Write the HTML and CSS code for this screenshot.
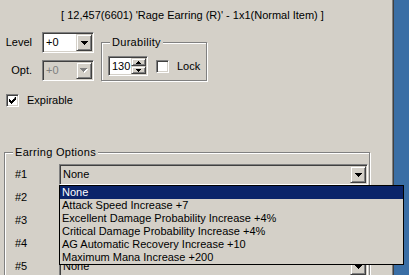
FILE: index.html
```html
<!DOCTYPE html>
<html>
<head>
<meta charset="utf-8">
<link rel="stylesheet" href="styles.css">
</head>
<body>
<div class="window">
  <div class="panel">
    <div class="title">[ 12,457(6601) 'Rage Earring (R)' - 1x1(Normal Item) ]</div>
    <div class="top">
      <div class="levels">
        <div class="row">
          <span class="lbl">Level</span>
          <div class="combo white"><span class="val">+0</span><span class="btn"><svg width="7" height="4" viewBox="0 0 7 4"><path d="M0 0h7v1h-1v1h-1v1h-1v1h-1v-1h-1v-1h-1v-1h-1z" fill="#000"/></svg></span></div>
        </div>
        <div class="row">
          <span class="lbl">Opt.</span>
          <div class="combo disabled"><span class="val">+0</span><span class="btn"><svg width="8" height="5" viewBox="0 0 8 5"><path d="M1 1h7v1h-1v1h-1v1h-1v1h-1v-1h-1v-1h-1v-1h-1z" fill="#fff"/><path d="M0 0h7v1h-1v1h-1v1h-1v1h-1v-1h-1v-1h-1v-1h-1z" fill="#808080"/></svg></span></div>
        </div>
      </div>
      <fieldset class="group dur">
        <legend>Durability</legend>
        <div class="durrow">
          <div class="spin">
            <span class="num">130</span>
            <span class="spinbtns">
              <span class="sbtn"><svg width="5" height="3" viewBox="0 0 5 3"><path d="M2 0h1v1h1v1h1v1h-5v-1h1v-1h1z" fill="#000"/></svg></span>
              <span class="sbtn"><svg width="5" height="3" viewBox="0 0 5 3"><path d="M0 0h5v1h-1v1h-1v1h-1v-1h-1v-1h-1z" fill="#000"/></svg></span>
            </span>
          </div>
          <span class="check"><span class="cbox"></span><span class="ctext">Lock</span></span>
        </div>
      </fieldset>
    </div>
    <div class="expirable check"><span class="cbox"><svg width="7" height="7" viewBox="0 0 7 7"><path d="M6 0h1v3h-1v1h-1v1h-1v1h-1v1h-1v-1h-1v-1h-1v-3h1v1h1v1h1v-1h1v-1h1z" fill="#000"/></svg></span><span class="ctext">Expirable</span></div>
    <fieldset class="group options">
      <legend>Earring Options</legend>
      <div class="optrows">
        <div class="orow"><span class="olbl">#1</span><div class="combo gray wide"><span class="val">None</span><span class="btn"><svg width="7" height="4" viewBox="0 0 7 4"><path d="M0 0h7v1h-1v1h-1v1h-1v1h-1v-1h-1v-1h-1v-1h-1z" fill="#000"/></svg></span></div></div>
        <div class="orow"><span class="olbl">#2</span><div class="combo gray wide"><span class="val"></span><span class="btn"><svg width="7" height="4" viewBox="0 0 7 4"><path d="M0 0h7v1h-1v1h-1v1h-1v1h-1v-1h-1v-1h-1v-1h-1z" fill="#000"/></svg></span></div></div>
        <div class="orow"><span class="olbl">#3</span><div class="combo gray wide"><span class="val"></span><span class="btn"><svg width="7" height="4" viewBox="0 0 7 4"><path d="M0 0h7v1h-1v1h-1v1h-1v1h-1v-1h-1v-1h-1v-1h-1z" fill="#000"/></svg></span></div></div>
        <div class="orow"><span class="olbl">#4</span><div class="combo gray wide"><span class="val"></span><span class="btn"><svg width="7" height="4" viewBox="0 0 7 4"><path d="M0 0h7v1h-1v1h-1v1h-1v1h-1v-1h-1v-1h-1v-1h-1z" fill="#000"/></svg></span></div></div>
        <div class="orow"><span class="olbl">#5</span><div class="combo gray wide"><span class="val">None</span><span class="btn"><svg width="7" height="4" viewBox="0 0 7 4"><path d="M0 0h7v1h-1v1h-1v1h-1v1h-1v-1h-1v-1h-1v-1h-1z" fill="#000"/></svg></span></div></div>
      </div>
    </fieldset>
  </div>
  <div class="edge"></div>
  <div class="desktop"></div>
  <ul class="list">
    <li class="sel">None</li>
    <li>Attack Speed Increase +7</li>
    <li>Excellent Damage Probability Increase +4%</li>
    <li>Critical Damage Probability Increase +4%</li>
    <li>AG Automatic Recovery Increase +10</li>
    <li>Maximum Mana Increase +200</li>
  </ul>
</div>
</body>
</html>
```

FILE: styles.css
```css
* { box-sizing: border-box; }
html, body { margin: 0; padding: 0; }
body {
  width: 409px;
  height: 275px;
  overflow: hidden;
  background: #3A6EA5;
  font-family: "Liberation Sans", Arial, sans-serif;
  font-size: 11px;
  line-height: 13px;
  color: #000;
}
.window {
  position: relative;
  display: flex;
  width: 409px;
  height: 275px;
  overflow: hidden;
}
.panel {
  width: 392px;
  flex: none;
  background: #D4D0C8;
}
.edge {
  width: 2px;
  flex: none;
  background: linear-gradient(to right, #808080 1px, #404040 1px);
}
.desktop { flex: 1; background: #3A6EA5; }

.title {
  padding-top: 9px;
  padding-right: 7px;
  height: 22px;
  text-align: center;
  white-space: nowrap;
}

.top { display: flex; margin-top: 10px; }
.levels { display: flex; flex-direction: column; gap: 7px; }
.row { display: flex; align-items: center; }
.lbl { width: 32px; margin-right: 10px; text-align: right; }

.combo {
  display: flex;
  height: 21px;
  width: 52px;
  border: 1px solid;
  border-color: #808080 #fff #fff #808080;
  box-shadow: inset 1px 1px 0 #404040, inset -1px -1px 0 #D4D0C8;
  padding: 1px;
  background: #fff;
}
.combo.gray { background: #D4D0C8; }
.combo.disabled { background: #D4D0C8; color: #808080; }
.combo.wide { width: 309px; }
.val { flex: 1; padding-left: 2px; line-height: 17px; white-space: nowrap; }
.btn {
  width: 16px;
  height: 17px;
  flex: none;
  display: flex;
  align-items: center;
  justify-content: center;
  background: #D4D0C8;
  border: 1px solid;
  border-color: #D4D0C8 #404040 #404040 #D4D0C8;
  box-shadow: inset 1px 1px 0 #fff, inset -1px -1px 0 #808080;
}
.btn svg, .sbtn svg { display: block; }

.group {
  margin: 0;
  border: 1px solid #808080;
  box-shadow: 1px 1px 0 #fff, inset 1px 1px 0 #fff;
}
.group legend {
  padding: 0 2px;
  line-height: 13px;
  background: #D4D0C8;
  letter-spacing: 0.3px;
}
.dur {
  margin: 4px 0 0 7px;
  width: 103px;
  padding: 7px 6px 4px 6px;
}
.dur legend { margin-left: 2px; }
.durrow { display: flex; align-items: center; }
.spin {
  display: flex;
  width: 40px;
  height: 20px;
  border: 1px solid;
  border-color: #808080 #fff #fff #808080;
  box-shadow: inset 1px 1px 0 #404040, inset -1px -1px 0 #D4D0C8;
  padding: 1px;
  background: #fff;
}
.num { flex: 1; padding-left: 2px; line-height: 16px; }
.spinbtns { display: flex; flex-direction: column; width: 15px; flex: none; }
.sbtn {
  height: 8px;
  display: flex;
  align-items: center;
  justify-content: center;
  background: #D4D0C8;
  border: 1px solid;
  border-color: #D4D0C8 #404040 #404040 #D4D0C8;
  box-shadow: inset 1px 1px 0 #fff, inset -1px -1px 0 #808080;
}

.check { display: flex; align-items: center; }
.durrow .check { margin-left: 8px; }
.cbox {
  width: 13px;
  height: 13px;
  flex: none;
  display: flex;
  align-items: center;
  justify-content: center;
  background: #fff;
  border: 1px solid;
  border-color: #808080 #fff #fff #808080;
  box-shadow: inset 1px 1px 0 #404040, inset -1px -1px 0 #D4D0C8;
}
.ctext { margin-left: 8px; }
.expirable { margin: 13px 0 0 6px; }

.options {
  margin: 39px 0 0 4px;
  width: 366px;
  height: 200px;
  padding: 5px 0 0 8px;
}
.options legend { margin-left: 0; }
.optrows { display: flex; flex-direction: column; gap: 2px; }
.orow { display: flex; align-items: center; }
.olbl { width: 46px; padding-left: 2px; }

.list {
  position: absolute;
  left: 59px;
  top: 185px;
  width: 345px;
  height: 80px;
  margin: 0;
  padding: 0;
  list-style: none;
  background: #D4D0C8;
  border: 1px solid #000;
}
.list li {
  height: 13px;
  line-height: 13px;
  padding-left: 2px;
  white-space: nowrap;
}
.list li.sel { background: #0A246A; color: #fff; }
```
